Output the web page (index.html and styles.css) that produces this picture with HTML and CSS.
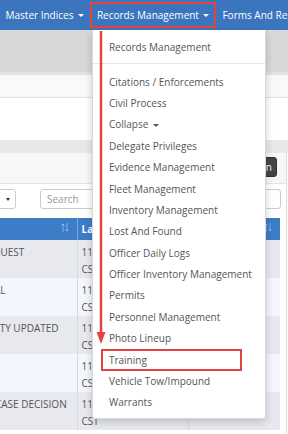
FILE: index.html
```html
<!DOCTYPE html>
<html lang="en">
<head>
  <meta charset="UTF-8">
  <meta name="viewport" content="width=device-width, initial-scale=1.0">
  <title>Records Management</title>
  <link rel="stylesheet" href="styles.css">
</head>
<body>
  <ul class="navbar">
    <li class="nav-item">
      <a class="nav-link" href="#">Master Indices<span class="caret"></span></a>
    </li>
    <li class="nav-item">
      <a class="nav-link" href="#">Records Management<span class="caret"></span><span class="callout"></span></a>

      <ul class="dropdown-menu">
        <li><a href="#">Records Management</a></li>
        <li class="divider"></li>
        <li><a href="#">Citations / Enforcements</a></li>
        <li><a href="#">Civil Process</a></li>
        <li><a href="#">Collapse<span class="caret"></span></a></li>
        <li><a href="#">Delegate Privileges</a></li>
        <li><a href="#">Evidence Management</a></li>
        <li><a href="#">Fleet Management</a></li>
        <li><a href="#">Inventory Management</a></li>
        <li><a href="#">Lost And Found</a></li>
        <li><a href="#">Officer Daily Logs</a></li>
        <li><a href="#">Officer Inventory Management</a></li>
        <li><a href="#">Permits</a></li>
        <li><a href="#">Personnel Management</a></li>
        <li><a href="#">Photo Lineup</a></li>
        <li class="marked"><a href="#">Training</a><span class="callout"></span></li>
        <li><a href="#">Vehicle Tow/Impound</a></li>
        <li><a href="#">Warrants</a></li>

        <!-- annotation arrow -->
        <svg class="arrow" width="10" height="314" viewBox="0 0 10 314">
          <line x1="5" y1="0" x2="5" y2="304" stroke="#e4443f" stroke-width="2.5" />
          <polygon points="0.5,301 9.5,301 5,313" fill="#e4443f" />
        </svg>
      </ul>
    </li>
    <li class="nav-item">
      <a class="nav-link" href="#">Forms And Reports<span class="caret"></span></a>
    </li>
  </ul>

  <div class="crumbs"></div>
  <div class="toolbar"></div>
  <div class="spacer"></div>
  <div class="band"></div>

  <section class="panel">
    <header class="panel-heading">
      <button class="btn-dark">Show Column</button>
    </header>
    <div class="panel-body">
      <div class="controls">
        <span class="select">10<span class="caret"></span></span>
        <input class="search" type="text" placeholder="Search">
      </div>

      <table class="grid">
        <colgroup>
          <col style="width: 111px">
          <col style="width: 111px">
          <col style="width: 92px">
        </colgroup>
        <thead>
          <tr>
            <th>Type <svg class="sort" width="8" height="9" viewBox="0 0 8 9"><path d="M2 9V1M0.5 2.5L2 1l1.5 1.5M6 0v8M4.5 6.5L6 8l1.5-1.5" fill="none" stroke="currentColor" stroke-width="1"/></svg></th>
            <th>Last Updated <svg class="sort" width="8" height="9" viewBox="0 0 8 9"><path d="M2 9V1M0.5 2.5L2 1l1.5 1.5M6 0v8M4.5 6.5L6 8l1.5-1.5" fill="none" stroke="currentColor" stroke-width="1"/></svg></th>
            <th>Status <svg class="sort" width="8" height="9" viewBox="0 0 8 9"><path d="M2 9V1M0.5 2.5L2 1l1.5 1.5M6 0v8M4.5 6.5L6 8l1.5-1.5" fill="none" stroke="currentColor" stroke-width="1"/></svg></th>
          </tr>
        </thead>
        <tbody>
          <tr>
            <td>IT REQUEST</td>
            <td>11/14/2019 09:12 AM<br>CST</td>
            <td></td>
          </tr>
          <tr>
            <td>APPEAL</td>
            <td>11/13/2019 04:40 PM<br>CST</td>
            <td></td>
          </tr>
          <tr>
            <td>ACTIVITY UPDATED</td>
            <td>11/13/2019 02:05 PM<br>CST</td>
            <td></td>
          </tr>
          <tr>
            <td></td>
            <td>11/12/2019 11:27 AM<br>CST</td>
            <td></td>
          </tr>
          <tr>
            <td>NEW CASE DECISION</td>
            <td>11/12/2019 08:51 AM<br>CST</td>
            <td></td>
          </tr>
        </tbody>
      </table>
    </div>
  </section>
</body>
</html>
```

FILE: styles.css
```css
* {
  box-sizing: border-box;
  margin: 0;
  padding: 0;
}

body {
  font-family: 'Open Sans', sans-serif;
  font-size: 10px;
  color: #555;
  background: #fff;
  width: 288px;
  height: 434px;
  overflow: hidden;
}

a {
  text-decoration: none;
}

.caret {
  display: inline-block;
  width: 0;
  height: 0;
  margin-left: 4.5px;
  vertical-align: middle;
  border-top: 3.5px solid;
  border-left: 3px solid transparent;
  border-right: 3px solid transparent;
}

/* top menu */
.navbar {
  display: flex;
  height: 30px;
  background: #3b75bd;
  list-style: none;
  white-space: nowrap;
  position: relative;
  z-index: 5;
}

.nav-item {
  position: relative;
}

.nav-item:first-child {
  margin-left: -1px;
}

.nav-link {
  position: relative;
  display: flex;
  align-items: center;
  height: 30px;
  padding: 0 6.5px;
  color: #fff;
}

.nav-link .callout {
  position: absolute;
  top: 2px;
  bottom: 2px;
  left: 0;
  right: 0;
  border: 2.5px solid #e4443f;
}

.dropdown-menu {
  position: absolute;
  top: 100%;
  left: 1.5px;
  width: 174px;
  padding: 6px 0 4.5px;
  list-style: none;
  background: #fff;
  border: 1px solid rgba(0, 0, 0, 0.15);
  border-top: 0;
  border-radius: 0 0 3px 3px;
  box-shadow: 0 3px 8px rgba(0, 0, 0, 0.18);
}

.dropdown-menu a {
  display: block;
  height: 21.4px;
  padding: 1.5px 16px 0;
  line-height: 19.9px;
  color: #555;
  white-space: nowrap;
}

.dropdown-menu .divider {
  height: 1px;
  margin: 6px 0 6.7px;
  background: #e5e5e5;
}

.dropdown-menu .marked {
  position: relative;
}

.marked .callout {
  position: absolute;
  top: 0;
  bottom: 0;
  left: 8px;
  right: 23px;
  border: 2.5px solid #e4443f;
}

.dropdown-menu .arrow {
  position: absolute;
  top: 1px;
  left: 3px;
}

/* page under the menu */
.crumbs {
  height: 45px;
  background: #d8d8d8;
  border-bottom: 3px solid #e2e2e2;
}

.toolbar {
  height: 23px;
  background: #f9f9f9;
  border-bottom: 1px solid #e2e2e2;
}

.spacer {
  height: 42px;
}

.band {
  height: 13px;
  background: #e8e8e8;
}

.panel {
  margin-right: 1px;
  border-right: 1px solid #dcdcdc;
  height: 300px;
}

.panel-heading {
  display: flex;
  justify-content: flex-end;
  align-items: flex-start;
  height: 31px;
  padding: 4px 9px 0 0;
  background: #f7f7f7;
  border-bottom: 1px solid #e5e5e5;
}

.btn-dark {
  height: 20px;
  padding: 0 4px 0 8px;
  font-family: inherit;
  font-size: 10px;
  color: #fff;
  background: #454545;
  border: 1px solid #333;
  border-radius: 3px;
}

.panel-body {
  padding: 5px 5px 0 0;
}

.controls {
  display: flex;
  align-items: center;
  gap: 24px;
  height: 20px;
}

.select {
  display: flex;
  align-items: center;
  justify-content: space-between;
  width: 46px;
  height: 20px;
  margin-left: -30px;
  padding: 0 5px;
  color: #555;
  border: 1px solid #ccc;
  border-radius: 3px;
}

.select .caret {
  color: #333;
  border-top-width: 3px;
  border-left-width: 2.5px;
  border-right-width: 2.5px;
}

.search {
  flex: 1;
  height: 20px;
  padding: 0 6px;
  font-family: inherit;
  font-size: 10px;
  border: 1px solid #ccc;
  border-radius: 3px;
}

.search::placeholder {
  color: #999;
}

/* records table */
.grid {
  width: 314px;
  margin: 9px 0 0 -34px;
  table-layout: fixed;
  border-collapse: collapse;
}

.grid th {
  height: 22px;
  padding: 0 4px;
  text-align: left;
  font-weight: bold;
  color: #fff;
  background: #3d7dc7;
  border-left: 1px solid #75a2d8;
  white-space: nowrap;
  overflow: hidden;
}

.grid th:first-child,
.grid td:first-child {
  border-left: 0;
}

.sort {
  float: right;
  margin: 1px 4px 0 0;
  color: rgba(255, 255, 255, 0.4);
}

.grid td {
  padding: 4px 4px 1px;
  line-height: 16.5px;
  vertical-align: top;
  color: #555;
  border-left: 1px solid #d6d9df;
  white-space: nowrap;
  overflow: hidden;
}

.grid tbody tr:nth-child(odd) {
  background: #e7e9ef;
}

.grid tbody tr:nth-child(even) {
  background: #f3f6fc;
}
```
